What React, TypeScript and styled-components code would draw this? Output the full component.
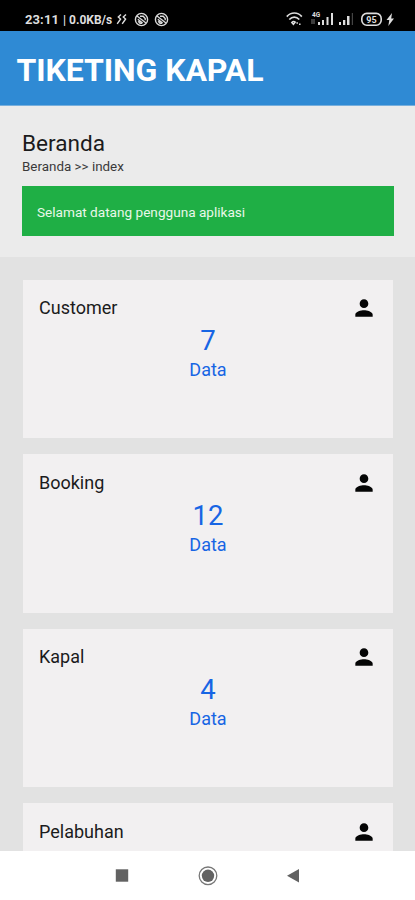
import React from "react";
import styled, { createGlobalStyle } from "styled-components";

const GlobalStyle = createGlobalStyle`
  *, *::before, *::after { box-sizing: border-box; }
  html, body { margin: 0; padding: 0; overflow: hidden; }
  body { font-family: Roboto, "Liberation Sans", sans-serif; color: #1b1b1c; }
  h1, h2, h3, p { margin: 0; font-weight: 400; }
  svg { display: block; flex: none; }
`;

const Screen = styled.div`
  width: 415px;
  height: 900px;
  display: flex;
  flex-direction: column;
  overflow: hidden;
  background: #e2e2e2;
`;

const StatusBar = styled.div`
  flex: none;
  height: 31px;
  padding: 8px 21px 0 25px;
  display: flex;
  justify-content: space-between;
  background: #000;
  color: #dedede;
`;

const StatusGroup = styled.div`
  height: 23px;
  display: flex;
  align-items: center;
`;

const StatusText = styled.span<{ $size: number; $gap?: number }>`
  font-size: ${(p) => p.$size}px;
  font-weight: 700;
  line-height: 22px;
  letter-spacing: ${(p) => (p.$size > 12 ? 0.1 : 0)}px;
  margin-right: ${(p) => p.$gap ?? 0}px;
`;

const AppBar = styled.header`
  flex: none;
  height: 75px;
  padding: 19px 17px 0 16.5px;
  background: #2f8ad4;
  border-bottom: 1px solid #78afdc;
`;

const AppTitle = styled.h1`
  && { font-weight: 700; }
  font-size: 32px;
  line-height: 40px;
  letter-spacing: -0.08px;
  color: #fff;
  white-space: nowrap;
`;

const Intro = styled.section`
  flex: none;
  height: 151px;
  padding: 23px 21px 0 22px;
  background: #ebebeb;
`;

const PageTitle = styled.h2`
  font-size: 22.6px;
  line-height: 29px;
`;

const Breadcrumb = styled.p`
  font-size: 13.4px;
  line-height: 18px;
  color: #3a3a3a;
`;

const Notice = styled.div`
  height: 50px;
  margin-top: 10px;
  padding: 1px 15px 0;
  display: flex;
  align-items: center;
  background: #1faf45;
  color: #e9f8e9;
  font-size: 13.6px;
`;

const CardList = styled.main`
  flex: 1;
  min-height: 0;
  overflow: hidden;
  padding: 22.5px 22px 0 23px;
  display: flex;
  flex-direction: column;
  gap: 16px;
`;

const Card = styled.article`
  flex: 0 0 158.6px;
  padding: 16.5px 16px 0;
  background: #f2f0f1;

  &:last-child {
    flex: 1 1 0;
    min-height: 0;
  }
`;

const CardHead = styled.div`
  height: 24px;
  display: flex;
  align-items: center;
  justify-content: space-between;
`;

const CardTitle = styled.h3`
  font-size: 18px;
  line-height: 24px;
`;

const Count = styled.p`
  margin-top: 5px;
  font-size: 27.5px;
  line-height: 32px;
  text-align: center;
  color: #1765e4;
`;

const Unit = styled.p`
  margin-top: 1px;
  font-size: 18px;
  line-height: 24px;
  text-align: center;
  color: #1765e4;
`;

const NavBar = styled.nav`
  flex: none;
  height: 49px;
  padding: 0 115px;
  display: flex;
  align-items: center;
  justify-content: space-between;
  background: #fff;
`;

const PersonIcon = () => (
  <svg width="26" height="26" viewBox="0 0 24 24">
    <path
      fill="#050505"
      d="M12 12c2.21 0 4-1.79 4-4s-1.79-4-4-4-4 1.79-4 4 1.79 4 4 4zm0 2c-2.67 0-8 1.34-8 4v2h16v-2c0-2.66-5.33-4-8-4z"
    />
  </svg>
);

const VibrateIcon = () => (
  <svg width="12" height="12" viewBox="0 0 12 12" fill="none" stroke="#dedede" strokeWidth="1.4">
    <path d="M5 1.5 2.3 4 4.6 6 1.2 10.8M10 1.5 7.3 4l2.3 2-3.4 4.8" />
  </svg>
);

const BlockedIcon = () => (
  <svg width="15" height="15" viewBox="0 0 15 15" fill="none" stroke="#d8d8d8">
    <circle cx="7.5" cy="7.5" r="6.1" strokeWidth="1.4" />
    <path d="M3 4 12 11M3.8 7.2l4.8 3.9M6 4.2h3.2l2 2.4v1.6M4.2 9.2l1.8 2h2" strokeWidth="1.4" />
  </svg>
);

const WifiIcon = () => (
  <svg width="17" height="14" viewBox="0 0 17 14" fill="none" stroke="#dedede" strokeWidth="1.7">
    <path d="M.8 4.6C5-.2 11.7-.2 15.8 4.6M3.3 7.5c3-3.2 7-3.2 10 0" />
    <path d="M5.8 10.6c1-1.1 2.3-1.3 3.4-.4L7.4 12.3zM11.2 10.2v1.6M13.8 11.4v1.6" strokeWidth="1.5" />
  </svg>
);

const SignalIcon = () => (
  <svg width="44" height="16" viewBox="0 0 44 16">
    <text x="2" y="5.8" fill="#dedede" fontFamily="Roboto, sans-serif" fontWeight="700" fontSize="6.5">4G</text>
    <path fill="#3c3c3c" d="M1 8h4v5H1z" />
    <path fill="#dedede" d="M8 11h2v3H8zM12 9h2v5h-2zM16.5 6h2v8h-2zM21 2h2v12h-2zM29 11h2v3h-2zM33 9h2.3v5H33zM37 5h2.5v9H37z" />
    <path fill="#444" d="M41.8 2H43v12h-1.2z" />
  </svg>
);

const BatteryIcon = () => (
  <svg width="33" height="15" viewBox="0 0 33 15">
    <rect x="0.8" y="1.4" width="19.4" height="11.8" rx="5" fill="none" stroke="#dedede" strokeWidth="1.6" />
    <text x="10.5" y="10.6" textAnchor="middle" fill="#dedede" fontFamily="Roboto, sans-serif" fontWeight="700" fontSize="9">95</text>
    <path fill="#dedede" d="M31 1 25.5 8h2.8l-1 6L33 6.4h-2.8z" />
  </svg>
);

const LeadingIcons = styled.div`
  display: flex;
  align-items: center;
  padding-bottom: 1px;
  gap: 4.5px;

  & > :first-child { margin-right: 1.5px; }
`;

const TrailingIcons = styled.div`
  display: flex;
  align-items: center;
  padding-bottom: 1px;
  gap: 7px;
`;

const RecentIcon = () => (
  <svg width="14" height="20" viewBox="0 0 14 20">
    <rect x=".8" y="3.3" width="12.4" height="12.4" fill="#626262" />
  </svg>
);

const HomeIcon = () => (
  <svg width="20" height="20" viewBox="0 0 20 20">
    <circle cx="10" cy="9.8" r="8.8" fill="none" stroke="#777" strokeWidth="1.3" />
    <circle cx="10" cy="9.8" r="6.2" fill="#626262" />
  </svg>
);

const BackIcon = () => (
  <svg width="14" height="20" viewBox="0 0 14 20">
    <path d="M1 9.8 13 3v13.6z" fill="#626262" />
  </svg>
);

type Menu = { name: string; count?: number };

const menus: Menu[] = [
  { name: "Customer", count: 7 },
  { name: "Booking", count: 12 },
  { name: "Kapal", count: 4 },
  { name: "Pelabuhan" },
];

export default function App() {
  return (
    <Screen>
      <GlobalStyle />
      <StatusBar>
        <StatusGroup>
          <StatusText $size={13} $gap={4}>23:11</StatusText>
          <StatusText $size={12} $gap={3}>|</StatusText>
          <StatusText $size={12} $gap={4}>0.0KB/s</StatusText>
          <LeadingIcons>
            <VibrateIcon />
            <BlockedIcon />
            <BlockedIcon />
          </LeadingIcons>
        </StatusGroup>
        <StatusGroup>
          <TrailingIcons>
            <WifiIcon />
            <SignalIcon />
            <BatteryIcon />
          </TrailingIcons>
        </StatusGroup>
      </StatusBar>
      <AppBar>
        <AppTitle>TIKETING KAPAL</AppTitle>
      </AppBar>
      <Intro>
        <PageTitle>Beranda</PageTitle>
        <Breadcrumb>Beranda &gt;&gt; index</Breadcrumb>
        <Notice>Selamat datang pengguna aplikasi</Notice>
      </Intro>
      <CardList>
        {menus.map((menu) => (
          <Card key={menu.name}>
            <CardHead>
              <CardTitle>{menu.name}</CardTitle>
              <PersonIcon />
            </CardHead>
            {menu.count !== undefined && (
              <>
                <Count>{menu.count}</Count>
                <Unit>Data</Unit>
              </>
            )}
          </Card>
        ))}
      </CardList>
      <NavBar>
        <RecentIcon />
        <HomeIcon />
        <BackIcon />
      </NavBar>
    </Screen>
  );
}
